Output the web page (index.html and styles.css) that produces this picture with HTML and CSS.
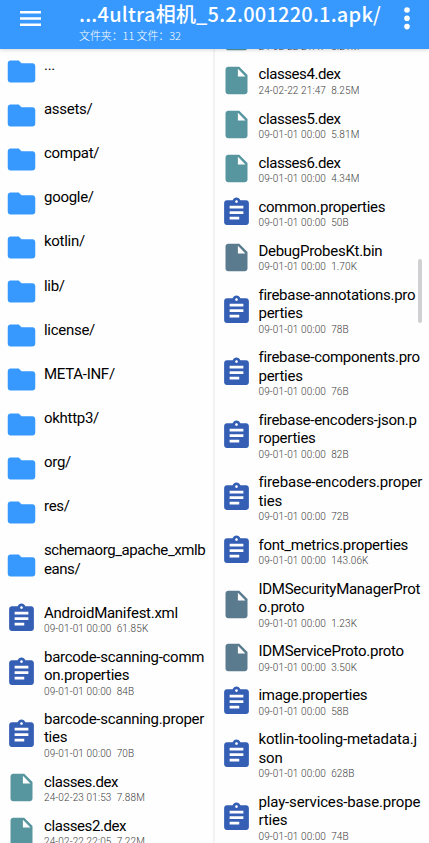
FILE: index.html
```html
<!DOCTYPE html>
<html lang="zh-CN">
<head>
<meta charset="utf-8">
<title>文件管理</title>
<link rel="stylesheet" href="styles.css">
</head>
<body>
<svg class="defs" aria-hidden="true">
  <symbol id="folder" viewBox="0 0 24 24"><path d="M10 4H4c-1.1 0-2 .9-2 2v12c0 1.1.9 2 2 2h16c1.1 0 2-.9 2-2V8c0-1.1-.9-2-2-2h-8z"/></symbol>
  <symbol id="file" viewBox="0 0 24 24"><path d="M6 2c-1.1 0-2 .9-2 2v16c0 1.1.9 2 2 2h12c1.1 0 2-.9 2-2V8l-6-6zm7 7V3.500l5.500 5.500z"/></symbol>
  <symbol id="doc" viewBox="0 0 24 24"><path d="M19 3h-4.180C14.400 1.840 13.300 1 12 1s-2.400.840-2.820 2H5c-1.100 0-2 .9-2 2v14c0 1.100.9 2 2 2h14c1.100 0 2-.9 2-2V5c0-1.100-.9-2-2-2zm-7 0c.550 0 1 .450 1 1s-.450 1-1 1-1-.450-1-1 .450-1 1-1zm2 14H7v-2h7zm3-4H7v-2h10zm0-4H7V7h10z"/></symbol>
</svg>
<header class="bar">
  <svg class="menu" viewBox="0 0 21 15"><path d="M0 1.300h21M0 7.500h21M0 13.700h21"/></svg>
  <div class="heading">
    <h1>...4ultra相机_5.2.001220.1.apk/</h1>
    <p>文件夹：11 文件：32</p>
  </div>
  <svg class="more" viewBox="0 0 6 23"><circle cx="3" cy="3" r="2.800"/><circle cx="3" cy="11.300" r="2.800"/><circle cx="3" cy="19.600" r="2.800"/></svg>
</header>
<main class="panes">
  <ul class="pane">
    <li class="row"><svg class="folder"><use href="#folder"/></svg><div><b>...</b></div></li>
    <li class="row"><svg class="folder"><use href="#folder"/></svg><div><b>assets/</b></div></li>
    <li class="row"><svg class="folder"><use href="#folder"/></svg><div><b>compat/</b></div></li>
    <li class="row"><svg class="folder"><use href="#folder"/></svg><div><b>google/</b></div></li>
    <li class="row"><svg class="folder"><use href="#folder"/></svg><div><b>kotlin/</b></div></li>
    <li class="row"><svg class="folder"><use href="#folder"/></svg><div><b>lib/</b></div></li>
    <li class="row"><svg class="folder"><use href="#folder"/></svg><div><b>license/</b></div></li>
    <li class="row"><svg class="folder"><use href="#folder"/></svg><div><b>META-INF/</b></div></li>
    <li class="row"><svg class="folder"><use href="#folder"/></svg><div><b>okhttp3/</b></div></li>
    <li class="row"><svg class="folder"><use href="#folder"/></svg><div><b>org/</b></div></li>
    <li class="row"><svg class="folder"><use href="#folder"/></svg><div><b>res/</b></div></li>
    <li class="row tall"><svg class="folder"><use href="#folder"/></svg><div><b class="tight">schemaorg_apache_xmlb<br>eans/</b></div></li>
    <li class="row"><svg class="doc"><use href="#doc"/></svg><div><b>AndroidManifest.xml</b><small>09-01-01 00:00&nbsp; 61.85K</small></div></li>
    <li class="row tall"><svg class="doc"><use href="#doc"/></svg><div><b>barcode-scanning-comm<br>on.properties</b><small>09-01-01 00:00&nbsp; 84B</small></div></li>
    <li class="row tall"><svg class="doc"><use href="#doc"/></svg><div><b>barcode-scanning.proper<br>ties</b><small>09-01-01 00:00&nbsp; 70B</small></div></li>
    <li class="row"><svg class="dex"><use href="#file"/></svg><div><b class="tight">classes.dex</b><small>24-02-23 01:53&nbsp; 7.88M</small></div></li>
    <li class="row"><svg class="dex"><use href="#file"/></svg><div><b class="tight">classes2.dex</b><small>24-02-22 22:05&nbsp; 7.22M</small></div></li>
  </ul>
  <ul class="pane scrolled">
    <li class="row"><svg class="dex"><use href="#file"/></svg><div><b></b><small>24-02-22 21:47&nbsp; 8.21M</small></div></li>
    <li class="row"><svg class="dex"><use href="#file"/></svg><div><b class="tight">classes4.dex</b><small>24-02-22 21:47&nbsp; 8.25M</small></div></li>
    <li class="row"><svg class="dex"><use href="#file"/></svg><div><b class="tight">classes5.dex</b><small>09-01-01 00:00&nbsp; 5.81M</small></div></li>
    <li class="row"><svg class="dex"><use href="#file"/></svg><div><b class="tight">classes6.dex</b><small>09-01-01 00:00&nbsp; 4.34M</small></div></li>
    <li class="row"><svg class="doc"><use href="#doc"/></svg><div><b>common.properties</b><small>09-01-01 00:00&nbsp; 50B</small></div></li>
    <li class="row"><svg class="bin"><use href="#file"/></svg><div><b>DebugProbesKt.bin</b><small>09-01-01 00:00&nbsp; 1.70K</small></div></li>
    <li class="row tall"><svg class="doc"><use href="#doc"/></svg><div><b>firebase-annotations.pro<br>perties</b><small>09-01-01 00:00&nbsp; 78B</small></div></li>
    <li class="row tall"><svg class="doc"><use href="#doc"/></svg><div><b>firebase-components.pro<br>perties</b><small>09-01-01 00:00&nbsp; 76B</small></div></li>
    <li class="row tall"><svg class="doc"><use href="#doc"/></svg><div><b>firebase-encoders-json.p<br>roperties</b><small>09-01-01 00:00&nbsp; 82B</small></div></li>
    <li class="row tall"><svg class="doc"><use href="#doc"/></svg><div><b class="loose">firebase-encoders.proper<br>ties</b><small>09-01-01 00:00&nbsp; 72B</small></div></li>
    <li class="row"><svg class="doc"><use href="#doc"/></svg><div><b>font_metrics.properties</b><small>09-01-01 00:00&nbsp; 143.06K</small></div></li>
    <li class="row tall"><svg class="bin"><use href="#file"/></svg><div><b>IDMSecurityManagerProt<br>o.proto</b><small>09-01-01 00:00&nbsp; 1.23K</small></div></li>
    <li class="row"><svg class="bin"><use href="#file"/></svg><div><b>IDMServiceProto.proto</b><small>09-01-01 00:00&nbsp; 3.50K</small></div></li>
    <li class="row"><svg class="doc"><use href="#doc"/></svg><div><b>image.properties</b><small>09-01-01 00:00&nbsp; 58B</small></div></li>
    <li class="row tall"><svg class="doc"><use href="#doc"/></svg><div><b class="loose">kotlin-tooling-metadata.j<br>son</b><small>09-01-01 00:00&nbsp; 628B</small></div></li>
    <li class="row tall"><svg class="doc"><use href="#doc"/></svg><div><b class="loose">play-services-base.prope<br>rties</b><small>09-01-01 00:00&nbsp; 74B</small></div></li>
  </ul>
  <i class="thumb"></i>
</main>
</body>
</html>
```
FILE: styles.css
```css
* { box-sizing: border-box; margin: 0; padding: 0; }
body {
  width: 429px;
  height: 843px;
  display: flex;
  flex-direction: column;
  overflow: hidden;
  background: #fefefe;
  color: #000;
  font-family: Roboto, "Noto Sans CJK SC", sans-serif;
}
.defs { position: absolute; width: 0; height: 0; }
.bar {
  flex: none;
  height: 49px;
  display: flex;
  align-items: flex-start;
  padding-left: 20px;
  background: #3798fe;
  color: #fff;
  box-shadow: 0 1px 4px rgba(0, 0, 0, .16);
  z-index: 1;
}
.menu { flex: none; width: 21px; height: 15px; margin-top: 10.500px; }
.menu path { stroke: #fff; stroke-width: 2.400; }
.heading { width: 345px; padding-left: 38px; white-space: nowrap; }
.heading h1 {
  height: 28px;
  font: 500 20px/28px "Noto Sans CJK SC", sans-serif;
  letter-spacing: .220px;
}
.heading p { font: 300 11px/14px "Noto Sans CJK SC", sans-serif; letter-spacing: -.100px; }
.more { flex: none; width: 6px; height: 23px; margin: 7px 0 0 18px; fill: #fff; }
.panes { position: relative; flex: 1; min-height: 0; display: flex; overflow: hidden; }
.pane { flex: none; width: 214.500px; list-style: none; border-right: 2px solid #f2f2f3; }
.scrolled { margin-top: -34.600px; border: 0; }
.row { display: flex; align-items: center; height: 44.130px; padding-left: 5.200px; }
.row.tall { height: 62.400px; }
.row svg { flex: none; width: 33px; height: 33px; margin-right: 5.800px; }
.row div { align-self: flex-start; padding-top: 6.900px; white-space: nowrap; }
.row b {
  display: block;
  min-height: 18.300px;
  font-size: 15px;
  line-height: 18.300px;
  font-weight: 400;
  letter-spacing: -.280px;
}
.row .tight { letter-spacing: -.420px; }
.row .loose { letter-spacing: -.150px; }
.row small {
  display: block;
  margin-top: .200px;
  font-size: 10px;
  line-height: 13px;
  font-weight: 300;
  letter-spacing: .130px;
  color: #404040;
}
.row .folder { fill: #3798fe; margin-left: -.500px; margin-right: 6.300px; }
.doc { fill: #345fb5; }
.dex { fill: #57969f; }
.bin { fill: #5a7a8d; }
.thumb {
  position: absolute;
  top: 210px;
  right: 7px;
  width: 4px;
  height: 64px;
  border-radius: 2px;
  background: #d0d0d2;
}
```
